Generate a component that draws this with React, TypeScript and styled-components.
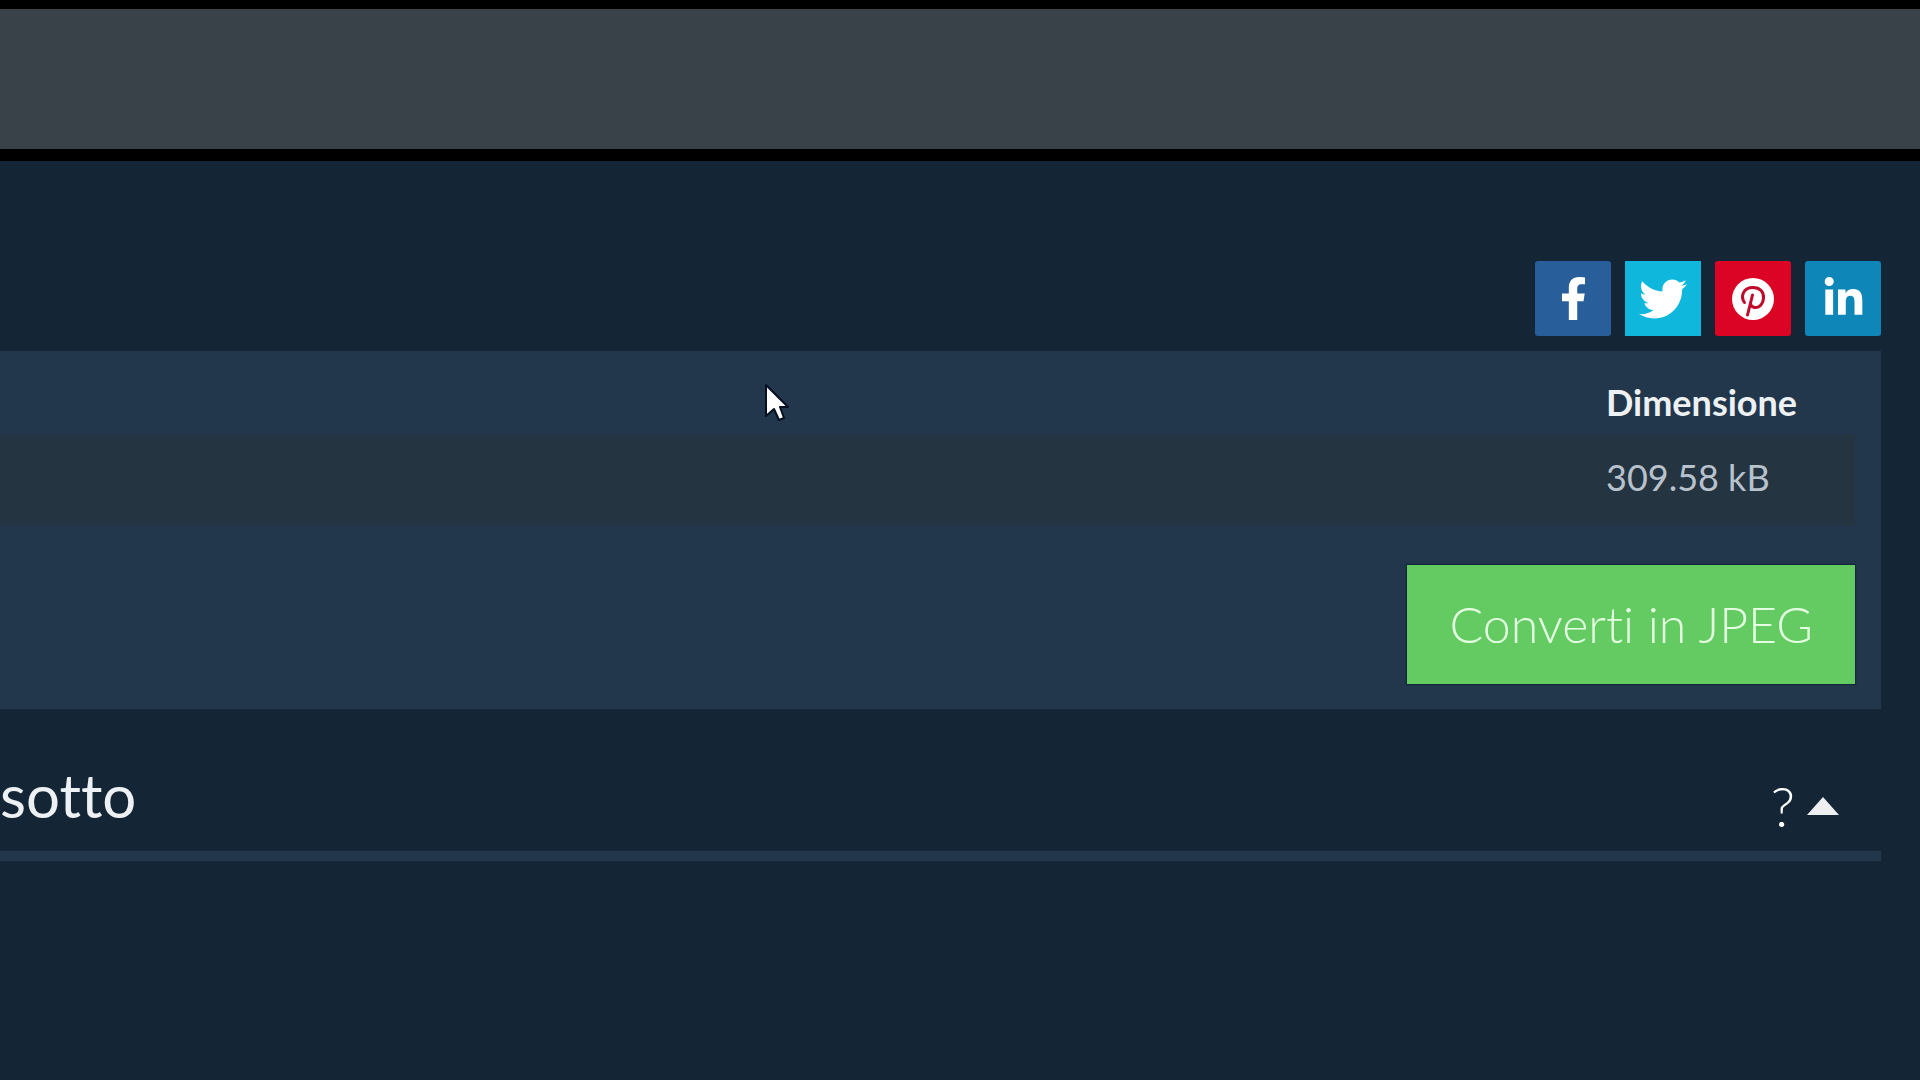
import React from "react";
import styled, { createGlobalStyle } from "styled-components";
import { FaFacebookF, FaTwitter, FaLinkedinIn } from "react-icons/fa";

const GlobalStyle = createGlobalStyle`
  *, *::before, *::after { box-sizing: border-box; }
  html { background: #142635; }
  body {
    margin: 0;
    color: #eef1f4;
    font-family: Lato, "Open Sans", sans-serif;
    font-variant-ligatures: none;
    overflow-x: hidden;
  }
`;

const TopBar = styled.header`
  height: 161px;
  background: #394248;
  border-top: 9px solid #000;
  border-bottom: 12px solid #000;
`;

const Page = styled.main`
  padding: 100px 39px 0 0;
`;

const ShareList = styled.nav`
  display: flex;
  justify-content: flex-end;
  gap: 14px;
`;

const ShareLink = styled.a<{ $color: string; $radius?: number }>`
  display: flex;
  align-items: center;
  justify-content: center;
  width: 76px;
  height: 75px;
  border-radius: ${(p) => p.$radius ?? 3}px;
  background: ${(p) => p.$color};
  color: #fff;
`;

const Panel = styled.section`
  display: flex;
  flex-direction: column;
  align-items: flex-end;
  margin-top: 15px;
  padding: 20px 26px 25px 0;
  background: #22374c;
`;

const FileTable = styled.table`
  width: 100%;
  table-layout: fixed;
  border-collapse: collapse;
  text-align: left;
  font-size: 36px;
`;

const SizeColumn = styled.col`
  width: 249px;
`;

const HeadCell = styled.th`
  height: 64px;
  padding: 0 0 2px;
  font-weight: 700;
`;

const Cell = styled.td`
  height: 90px;
  padding: 0 0 6px;
  background: #253441;
  color: #b7c2cc;
`;

const ConvertButton = styled.button`
  height: 119px;
  margin-top: 40px;
  padding: 0 42px 2px;
  border: 0;
  background: #64ca62;
  color: #e4ffe2;
  font: 300 50px/64px Lato, "Open Sans", sans-serif;
  font-variant-ligatures: none;
  box-shadow: 0 0 1px 1px #12293a;
`;

const SectionHeader = styled.div`
  display: flex;
  align-items: center;
  justify-content: space-between;
  height: 152px;
  padding: 30px 42px 0 0;
  border-bottom: 10px solid #22374c;
`;

const Heading = styled.h2`
  margin: 0;
  font-size: 60px;
  font-weight: 400;
  line-height: 72px;
`;

const HelpToggle = styled.button`
  display: flex;
  align-items: center;
  gap: 12px;
  padding: 22px 0 0;
  border: 0;
  background: none;
  color: #fff;
  font: 300 56px/64px Lato, "Open Sans", sans-serif;
`;

const Pointer = styled.svg`
  position: absolute;
  left: 764px;
  top: 382px;
  pointer-events: none;
`;

function PinterestMark() {
  return (
    <svg width="42" height="42" viewBox="0 0 42 42" aria-hidden="true">
      <circle cx="21" cy="21" r="21" fill="#fff" />
      <path
        d="M12.5 24.5C8 18 11.500 9.500 21 9.500C28 9.500 32 14 31.500 20C31 27 26.500 30 22.500 29.500C20 29 18.500 27.500 18.500 25.500M20.500 17L15.500 37"
        fill="none"
        stroke="#c00a2c"
        strokeWidth="3"
        strokeLinecap="round"
      />
    </svg>
  );
}

export default function App() {
  return (
    <>
      <GlobalStyle />
      <TopBar />
      <Page>
        <ShareList>
          <ShareLink href="#facebook" aria-label="Facebook" $color="#285e9a">
            <FaFacebookF size={43} />
          </ShareLink>
          <ShareLink href="#twitter" aria-label="Twitter" $color="#10b7dd" $radius={0}>
            <FaTwitter size={48} />
          </ShareLink>
          <ShareLink href="#pinterest" aria-label="Pinterest" $color="#dc0425">
            <PinterestMark />
          </ShareLink>
          <ShareLink href="#linkedin" aria-label="LinkedIn" $color="#0e86b7">
            <FaLinkedinIn size={43} />
          </ShareLink>
        </ShareList>

        <Panel>
          <FileTable>
            <colgroup>
              <col />
              <SizeColumn />
            </colgroup>
            <thead>
              <tr>
                <HeadCell />
                <HeadCell scope="col">Dimensione</HeadCell>
              </tr>
            </thead>
            <tbody>
              <tr>
                <Cell />
                <Cell>309.58 kB</Cell>
              </tr>
            </tbody>
          </FileTable>
          <ConvertButton type="button">Converti in JPEG</ConvertButton>
        </Panel>

        <SectionHeader>
          <Heading>sotto</Heading>
          <HelpToggle type="button" aria-expanded="true">
            ?
            <svg width="32" height="18" viewBox="0 0 32 18" aria-hidden="true">
              <path d="M16 0L32 18H0Z" fill="#eeeff1" />
            </svg>
          </HelpToggle>
        </SectionHeader>
      </Page>
      <Pointer width="28" height="42" viewBox="0 0 28 42" aria-hidden="true">
        <path
          d="M2 3V34L10 27L15 38L20 36L16 25H24Z"
          fill="#fff"
          stroke="#04101f"
          strokeWidth="2"
          strokeLinejoin="round"
        />
      </Pointer>
    </>
  );
}
